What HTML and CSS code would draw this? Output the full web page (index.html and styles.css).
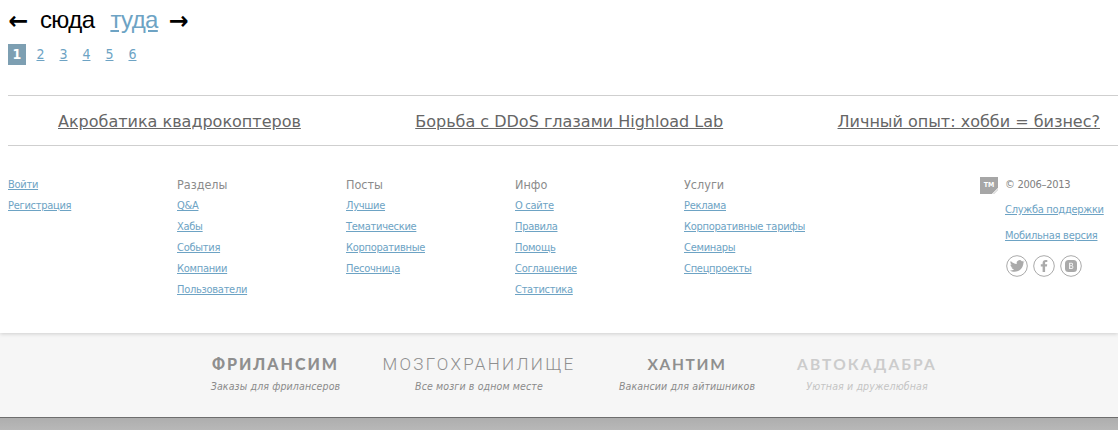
FILE: index.html
```html
<!DOCTYPE html>
<html lang="ru">
<head>
<meta charset="utf-8">
<title>Футер</title>
<link rel="stylesheet" href="styles.css">
</head>
<body>
<main class="content">
  <nav class="next-prev">
    <span class="arrow">←</span><span class="prev">сюда</span><a class="next" href="#">туда</a><span class="arrow">→</span>
  </nav>
  <ul class="pages">
    <li class="page current">1</li>
    <li class="page"><a href="#">2</a></li>
    <li class="page"><a href="#">3</a></li>
    <li class="page"><a href="#">4</a></li>
    <li class="page"><a href="#">5</a></li>
    <li class="page"><a href="#">6</a></li>
  </ul>
  <div class="promo">
    <a href="#">Акробатика квадрокоптеров</a>
    <a href="#">Борьба с DDoS глазами Highload Lab</a>
    <a href="#">Личный опыт: хобби = бизнес?</a>
  </div>
  <footer class="footer">
    <div class="col">
      <a href="#">Войти</a>
      <a href="#">Регистрация</a>
    </div>
    <div class="col">
      <h4>Разделы</h4>
      <a href="#">Q&amp;A</a>
      <a href="#">Хабы</a>
      <a href="#">События</a>
      <a href="#">Компании</a>
      <a href="#">Пользователи</a>
    </div>
    <div class="col">
      <h4>Посты</h4>
      <a href="#">Лучшие</a>
      <a href="#">Тематические</a>
      <a href="#">Корпоративные</a>
      <a href="#">Песочница</a>
    </div>
    <div class="col">
      <h4>Инфо</h4>
      <a href="#">О сайте</a>
      <a href="#">Правила</a>
      <a href="#">Помощь</a>
      <a href="#">Соглашение</a>
      <a href="#">Статистика</a>
    </div>
    <div class="col">
      <h4>Услуги</h4>
      <a href="#">Реклама</a>
      <a href="#">Корпоративные тарифы</a>
      <a href="#">Семинары</a>
      <a href="#">Спецпроекты</a>
    </div>
    <div class="about">
      <div class="tm">ТМ</div>
      <div class="about-text">
        <div class="copy">© 2006–2013</div>
        <a href="#">Служба поддержки</a>
        <a href="#">Мобильная версия</a>
        <div class="social">
          <svg class="soc" viewBox="0 0 22 22"><circle cx="11" cy="11" r="10.3"/><path class="fill" d="M18 6.600c-.6.300-1.100.4-1.700.5.600-.4 1.100-1 1.300-1.600-.6.300-1.200.6-1.800.7a2.900 2.900 0 0 0-5 2.700C8.300 8.800 6.200 7.600 4.800 5.900c-.8 1.300-.4 3 .9 3.900-.5 0-.9-.1-1.300-.4 0 1.400 1 2.700 2.300 2.900-.4.100-.9.100-1.300 0 .4 1.200 1.400 2 2.700 2-1.200 1-2.700 1.400-4.200 1.200 4 2.600 13 1.600 13.600-8 .6-.5 1.100-1 1.500-1.900z"/></svg>
          <svg class="soc" viewBox="0 0 22 22"><circle cx="11" cy="11" r="10.3"/><path class="fill" d="M9.600 17h2.500v-5.500h1.800l.3-2.200h-2.100V8c0-.6.200-1 1-1h1.200V5.100c-.2 0-.9-.1-1.700-.1-1.800 0-3 1.100-3 3v1.300H7.800v2.200h1.800z"/></svg>
          <svg class="soc" viewBox="0 0 22 22"><circle cx="11" cy="11" r="10.300"/><rect class="fill" x="5" y="5" width="12" height="12" rx="3.500"/><path class="cut" d="M9 7.800h2.800c1.600 0 1.600 2.400.4 2.800 1.700.2 1.600 3.400-.4 3.400H9zm1.200 1v1.500h1.300c.8 0 .8-1.500 0-1.500zm0 2.500V13h1.500c1 0 1-1.700 0-1.700z"/></svg>
        </div>
      </div>
    </div>
  </footer>
</main>
<section class="band">
  <div class="service">
    <div class="logo logo-freelansim">ФРИЛАНСИМ</div>
    <div class="tagline">Заказы для фрилансеров</div>
  </div>
  <div class="service">
    <div class="logo logo-brain">МОЗГОХРАНИЛИЩЕ</div>
    <div class="tagline">Все мозги в одном месте</div>
  </div>
  <div class="service">
    <div class="logo logo-hunt">ХАНТИМ</div>
    <div class="tagline">Вакансии для айтишников</div>
  </div>
  <div class="service faded">
    <div class="logo logo-auto">АВТОКАДАБРА</div>
    <div class="tagline">Уютная и дружелюбная</div>
  </div>
</section>
<div class="bottom"></div>
</body>
</html>
```
FILE: styles.css
```css
* { box-sizing: border-box; }
html, body { margin: 0; padding: 0; }
body {
  width: 1118px;
  height: 430px;
  overflow: hidden;
  background: #fff;
  font-family: "DejaVu Sans", Verdana, sans-serif;
  display: flex;
  flex-direction: column;
}
a { color: #6da3c4; }
.content {
  height: 333px;
  padding: 0 18px 0 8px;
  box-shadow: 0 1px 4px rgba(0,0,0,.16);
  position: relative;
  z-index: 1;
  background: #fff;
}
.next-prev {
  display: flex;
  align-items: center;
  height: 40px;
  margin-bottom: 4px;
  font-family: "Liberation Sans", Arial, sans-serif;
  font-size: 24px;
  letter-spacing: -.6px;
  color: #000;
}
.next-prev .arrow {
  font-family: "DejaVu Sans", sans-serif;
  font-size: 25px;
  font-weight: bold;
  letter-spacing: 0;
  transform: scaleX(.95);
}
.prev { margin-left: 11px; }
.next { margin: 0 10px 0 16px; }
.pages {
  list-style: none;
  margin: 0;
  padding: 0;
  display: flex;
  height: 21px;
  font-size: 14px;
  font-stretch: condensed;
  line-height: 21px;
  gap: 6px;
}
.page { width: 17px; text-align: center; }
.page.current {
  width: 18px;
  background: #7d9fb2;
  color: #fff;
  font-weight: bold;
}
.promo {
  margin-top: 30px;
  margin-right: -18px;
  height: 51px;
  border-top: 1px solid #cfcfcf;
  border-bottom: 1px solid #cfcfcf;
  display: flex;
  align-items: center;
  justify-content: space-between;
  padding: 2px 18px 0 50px;
  font-size: 16px;
}
.promo a { color: #666; }
.footer {
  display: flex;
  margin-top: 32px;
  font-size: 11px;
  font-stretch: condensed;
  letter-spacing: -.28px;
  line-height: 14px;
}
.col {
  width: 169px;
  flex: none;
  display: flex;
  flex-direction: column;
  align-items: flex-start;
  gap: 7px;
}
.col h4 {
  margin: 0;
  font-size: 12.500px;
  font-weight: normal;
  letter-spacing: 0;
  color: #8b8b8b;
  line-height: 14px;
}
.about {
  margin-left: 127px;
  display: flex;
  gap: 7px;
  flex: none;
}
.tm {
  width: 18px;
  height: 17px;
  margin-top: -1px;
  background: linear-gradient(135deg, #a6a6a6 0 82%, #e2e2e2 82% 90%, transparent 90%);
  color: #fff;
  font-size: 7px;
  font-weight: bold;
  letter-spacing: 0;
  line-height: 17px;
  text-align: center;
}
.about-text {
  display: flex;
  flex-direction: column;
  align-items: flex-start;
  white-space: nowrap;
}
.copy { color: #808080; height: 14px; margin-bottom: 11px; }
.about-text a { margin-bottom: 12px; }
.social { display: flex; gap: 5px; margin-left: 1px; }
.soc { width: 22px; height: 22px; }
.soc circle { fill: none; stroke: #aaa; stroke-width: 1; }
.soc .fill { fill: #aaa; }
.soc .cut { fill: #f0f0f0; }
.band {
  height: 84px;
  background: #f6f6f6;
  display: flex;
  padding-left: 170px;
}
.service {
  text-align: center;
  padding-top: 20px;
  flex: none;
}
.service:nth-child(1) { width: 211px; }
.service:nth-child(2) { width: 196px; }
.service:nth-child(3) { width: 220px; }
.service:nth-child(4) { width: 140px; }
.logo {
  height: 22px;
  line-height: 22px;
  white-space: nowrap;
  color: #8f8f8f;
}
.logo-freelansim { font-family: "Lato", sans-serif; font-weight: 900; letter-spacing: 2px; font-size: 16px; }
.logo-brain { font-family: "Roboto", sans-serif; font-weight: 300; letter-spacing: 2.300px; font-size: 17px; }
.logo-hunt { font-family: "Lato", sans-serif; font-weight: 700; letter-spacing: 1.700px; font-size: 15.500px; }
.logo-auto { font-family: "Lato", sans-serif; font-weight: 700; letter-spacing: 2.100px; font-size: 15.500px; color: #ccc; }
.tagline {
  margin-top: 4px;
  font-size: 10.500px;
  font-stretch: condensed;
  letter-spacing: .13px;
  line-height: 14px;
  font-style: italic;
  color: #8a8a8a;
  white-space: nowrap;
}
.faded .tagline { color: #c4c4c4; }
.bottom {
  flex: 1;
  border-top: 1px solid #6e6e6e;
  background: linear-gradient(#aeaeae, #b8b8b8);
}
```
